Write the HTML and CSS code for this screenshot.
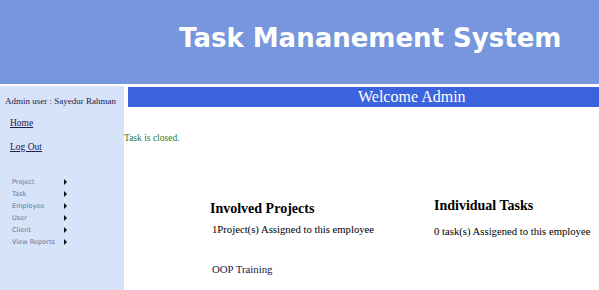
FILE: index.html
```html
<html>

<head>
    <title>Task Mananement System</title>
    <link rel="stylesheet" href="styles.css">
</head>

<body>
    <div class="header">
        <h1>Task Mananement System</h1>
    </div>

    <div class="page">
        <div class="sidebar">
            <p class="user">Admin user : Sayedur Rahman</p>
            <a class="navlink" href="#">Home</a>
            <a class="navlink logout" href="#">Log Out</a>

            <ul class="menu">
                <li><span>Project</span><i class="arrow"></i></li>
                <li><span>Task</span><i class="arrow"></i></li>
                <li><span>Employee</span><i class="arrow"></i></li>
                <li><span>User</span><i class="arrow"></i></li>
                <li><span>Client</span><i class="arrow"></i></li>
                <li><span>View Reports</span><i class="arrow"></i></li>
            </ul>
        </div>

        <div class="main">
            <div class="welcome">Welcome Admin</div>
            <p class="status">Task is closed.</p>

            <div class="columns">
                <div class="col projects">
                    <h2>Involved Projects</h2>
                    <p>1Project(s) Assigned to this employee</p>
                    <a class="project" href="#">OOP Training</a>
                </div>
                <div class="col tasks">
                    <h2>Individual Tasks</h2>
                    <p>0 task(s) Assigened to this employee</p>
                </div>
            </div>
        </div>
    </div>
</body>

</html>
```

FILE: styles.css
```css
body {
    margin: 0;
    font-family: "Liberation Serif", "Times New Roman", serif;
    font-size: 12px;
    background-color: white;
    height: 290px;
    display: flex;
    flex-direction: column;
}

.header {
    height: 84px;
    background-color: #7796dd;
    border-bottom: 2px solid white;
    display: flex;
}

.header h1 {
    margin: 20px 0 0 179px;
    font-family: "DejaVu Sans", Verdana, sans-serif;
    font-weight: bold;
    font-size: 26px;
    color: white;
    line-height: 36px;
}

.page {
    flex: 1;
    display: flex;
}

/* left menu */

.sidebar {
    width: 124px;
    background-color: #d6e3f8;
    display: flex;
    flex-direction: column;
    align-items: flex-start;
    font-size: 9px;
    line-height: 12px;
}

.user {
    margin: 9px 0 0 5px;
    color: #1f2050;
}

.navlink {
    color: #1f2050;
    margin: 10px 0 0 10px;
    font-size: 9.5px;
}

.logout {
    margin-top: 12px;
}

.menu {
    list-style: none;
    margin: 23px 0 0 12px;
    padding: 0;
    font-family: "DejaVu Sans", Verdana, sans-serif;
    font-size: 6.6px;
    color: #65759a;
}

.menu li {
    display: flex;
    align-items: center;
    height: 12px;
}

.menu span {
    width: 52px;
}

.arrow {
    width: 0;
    height: 0;
    border-top: 3px solid transparent;
    border-bottom: 3px solid transparent;
    border-left: 3px solid #111;
}

/* content */

.main {
    flex: 1;
}

.welcome {
    margin: 1px 0 0 4px;
    height: 20px;
    background-color: #3c63de;
    color: white;
    font-size: 16px;
    line-height: 20px;
    padding-left: 230px;
}

.status {
    margin: 25px 0 0 0;
    color: #2b7a2b;
    font-size: 9.5px;
    line-height: 12px;
}

.columns {
    display: grid;
    grid-template-columns: 224px 1fr;
    margin: 57px 0 0 86px;
}

.col h2 {
    margin: 0;
    font-size: 14px;
    line-height: 16px;
}

.col p {
    margin: 6px 0 0 2px;
    font-size: 10.7px;
    line-height: 13px;
}

.tasks h2 {
    margin-top: -3px;
}

.tasks p {
    margin-top: 11px;
    margin-left: 0;
}

.project {
    display: block;
    margin: 27px 0 0 2px;
    color: #20204a;
    text-decoration: none;
    font-size: 10.8px;
    line-height: 13px;
}
```
